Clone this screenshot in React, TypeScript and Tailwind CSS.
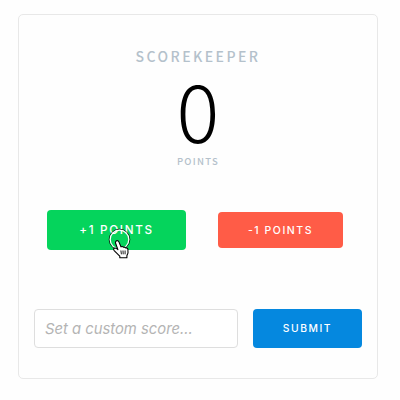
import React from 'react';

function Pointer() {
  return (
    <div className="pointer-events-none absolute left-[61px] top-[18px]">
      <svg width="24" height="32" viewBox="0 0 24 32" fill="none">
        <circle cx="11.5" cy="11.500" r="10.300" stroke="#111" strokeWidth=".9" />
        <circle cx="11.5" cy="11.500" r="9.300" stroke="#fff" strokeWidth="1.200" />
        <path
          d="M8 13.200C9 12.200 10.400 12.600 10.900 13.900L13 18.900C14 18.300 14.900 18.600 15.400 19.300C16.400 18.900 17.200 19.200 17.700 20C18.900 19.700 19.700 20.300 19.900 21.300C20.400 23.800 19.900 25.900 18.900 27.600V29.700H11.800V28.200C10.200 26.300 7.700 24.300 6 22.300C5.200 21.200 5.800 20.100 6.900 20C7.900 20 8.900 20.700 9.900 21.600L7.600 15.200C7.300 14.400 7.500 13.700 8 13.200Z"
          fill="#fff"
          stroke="#000"
          strokeWidth="1.100"
          strokeLinejoin="round"
        />
        <path d="M12.900 22.500l.5 3.800M15 22.500l.2 3.800M17.100 22.500v3.800" stroke="#000" strokeWidth=".9" />
      </svg>
    </div>
  );
}

export default function App() {
  return (
    <main className="flex h-[400px] w-[400px] flex-col items-start overflow-hidden bg-[#fefefe] pl-[18px] pt-[14px] font-['Inter',sans-serif]">
      <section className="flex h-[365px] w-[360px] flex-col rounded-[5px] border border-[#e8e8e8]">
        <header className="flex h-[195px] flex-col items-center pt-[31px] font-['Noto_Sans_CJK_JP',sans-serif] text-[#b4c1cb]">
          <h1 className="text-[14px] font-medium leading-5 tracking-[2.450px]">SCOREKEEPER</h1>
          <output className="mt-[3px] h-[85px] text-[80px] font-light leading-[79px] text-black">0</output>
          <span className="text-[9.500px] font-medium leading-[14px] tracking-[1.300px]">POINTS</span>
        </header>
        <div className="flex h-10 items-center gap-8 pl-[28px] text-white">
          <div className="relative">
            <button className="block h-10 w-[139px] rounded-[4px] bg-[#05d45c] pt-px text-[11.700px] font-medium tracking-[1.700px]">
              +1 POINTS
            </button>
            <Pointer />
          </div>
          <button className="h-9 w-[125px] rounded-[4px] bg-[#ff5c47] pt-px text-[10.500px] font-medium tracking-[1.550px]">
            -1 POINTS
          </button>
        </div>
        <form className="mt-[59px] flex gap-[15px] pl-[15px]">
          <input
            className="h-[39px] w-[204px] rounded-[4px] border border-[#dedede] bg-white px-[10px] text-[14.800px] italic outline-none placeholder:text-[#b4b4b4]"
            placeholder="Set a custom score..."
          />
          <button type="button" className="h-[39px] w-[109px] rounded-[4px] bg-[#0588df] text-[10.300px] font-medium tracking-[1.550px] text-white">
            SUBMIT
          </button>
        </form>
      </section>
    </main>
  );
}
